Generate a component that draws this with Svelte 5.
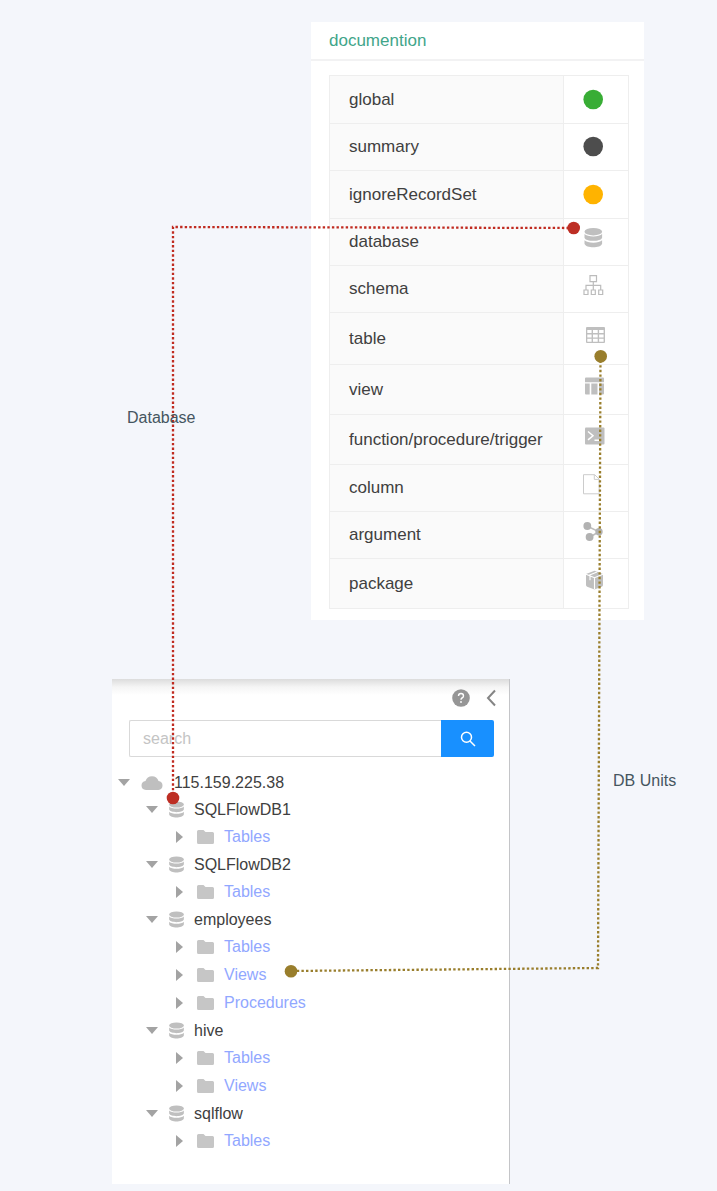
<script>
  const legend = [
    { name: 'global', icon: 'dot', color: '#38ad35', size: 'md' },
    { name: 'summary', icon: 'dot', color: '#4d4d4d', size: 'sm' },
    { name: 'ignoreRecordSet', icon: 'dot', color: '#ffb300', size: 'md' },
    { name: 'database', icon: 'database', size: 'sm' },
    { name: 'schema', icon: 'schema', size: 'sm' },
    { name: 'table', icon: 'table', size: 'xl' },
    { name: 'view', icon: 'view', size: 'lg' },
    { name: 'function/procedure/trigger', icon: 'function', size: 'lg' },
    { name: 'column', icon: 'column', size: 'sm' },
    { name: 'argument', icon: 'argument', size: 'sm' },
    { name: 'package', icon: 'package', size: 'lg' }
  ];

  const leaves = (...names) => names.map((name) => ({ name, level: 'leaf' }));
  const db = (name) => ({ name, level: 'db' });
  const tree = [
    { name: '115.159.225.38', level: 'root' },
    db('SQLFlowDB1'), ...leaves('Tables'),
    db('SQLFlowDB2'), ...leaves('Tables'),
    db('employees'), ...leaves('Tables', 'Views', 'Procedures'),
    db('hive'), ...leaves('Tables', 'Views'),
    db('sqlflow'), ...leaves('Tables')
  ];
</script>

{#snippet cylinder()}
  <ellipse cx="9" cy="4" rx="8.8" ry="3.7" />
  <path d="M.2 6.300C3 9.500 15 9.500 17.800 6.300V10C16.500 14.200 1.500 14.200 .2 10Z" />
  <path d="M.2 12.600C3 15.800 15 15.800 17.800 12.600V16C16.500 20.700 1.500 20.700 .2 16Z" />
{/snippet}

<main>
  <section class="doc">
    <h2>documention</h2>
    <div class="doc-body">
      <table>
        <tbody>
          {#each legend as row}
            <tr class={row.size}>
              <th scope="row">{row.name}</th>
              <td>
                <svg width="24" height="28" viewBox="0 0 24 28" fill="#bfbfbf" aria-hidden="true">
                  {#if row.icon === 'dot'}
                    <circle cx="12.2" cy="13.500" r="9.8" fill={row.color} />
                  {:else if row.icon === 'database'}
                    <g transform="translate(3.300 -.3)">{@render cylinder()}</g>
                  {:else if row.icon === 'schema'}
                    <g fill="none" stroke="#bcbcbc" stroke-width="1.2">
                      <path d="M9 .6h6.500v6H9ZM3 15h4v4.500H3ZM10.300 15h4v4.500h-4ZM17.700 15h4v4.500h-4Z" />
                      <path d="M12.300 6.600V15M5 15v-4.700h14.700V15" />
                    </g>
                  {:else if row.icon === 'table'}
                    <path transform="translate(0 -1)" fill-rule="evenodd" d="M6 3h17q1 0 1 1v14q0 1-1 1H6q-1 0-1-1V4q0-1 1-1ZM6.300 6v3.100h4.300V6ZM12 6v3.100h4.700V6ZM18.100 6v3.100h4.500V6ZM6.300 10.400v3h4.300v-3ZM12 10.400v3h4.700v-3ZM18.100 10.400v3h4.500v-3ZM6.300 14.700v3h4.300v-3ZM12 14.700v3h4.700v-3ZM18.100 14.700v3h4.500v-3Z" />
                  {:else if row.icon === 'view'}
                    <path transform="translate(0 -1)" d="M5 2.500h17q1 0 1 1v3.700H4V3.500q0-1 1-1ZM4 8.500h4.700v11H5q-1 0-1-1ZM10.300 8.500h6.200v11h-6.200ZM18 8.500h5v10q0 1-1 1h-4Z" />
                  {:else if row.icon === 'function'}
                    <rect x="4" y="1.500" width="19.500" height="17" rx="1" />
                    <path d="m7 5.500 5 4.200-5 4.200M13.500 14.300H20" fill="none" stroke="#fff" stroke-width="1.500" />
                  {:else if row.icon === 'column'}
                    <path transform="translate(0 -1)" d="M2.500 1.700h11.200l4.500 4.500v14.600H2.500ZM13.300 1.700v4.700h4.900" fill="none" stroke="#ccc" />
                  {:else if row.icon === 'argument'}
                    <g transform="translate(0 .5)">
                      <path d="M6 4.500 18 10.200 9 15.500" fill="none" stroke="#bdbdbd" stroke-width="1.500" />
                      <g fill="#b2b2b2"><circle cx="6.300" cy="4.500" r="3.900" /><circle cx="18" cy="10.200" r="3.700" /><circle cx="8.600" cy="15.500" r="3.900" /></g>
                    </g>
                  {:else}
                    <path d="M13.500.7 22 4v11q0 1.200-1.200 1.700L13.500 19.500 6.200 16.700Q5 16.200 5 15V4Z" />
                    <path d="M5 4.500 13.500 8 22 4.500M13.500 8v11.500M8 5.500 16 2.300M9 6.500v4" transform="translate(0 -.3)" fill="none" stroke="#fff" stroke-width="1.100" />
                  {/if}
                </svg>
              </td>
            </tr>
          {/each}
        </tbody>
      </table>
    </div>
  </section>

  <section class="browser">
    <div class="toolbar">
      <button type="button" aria-label="Help">
        <svg width="18" height="18" viewBox="0 0 18 18" aria-hidden="true">
          <circle cx="9" cy="9" r="8.800" fill="#969696" />
          <path d="M6.500 7q0-2.500 2.500-2.500T11.500 7Q11.500 8.300 10 9 9 9.500 9 10.700" fill="none" stroke="#fff" stroke-width="1.400" />
          <circle cx="9" cy="13" r=".9" fill="#fff" />
        </svg>
      </button>
      <button type="button" aria-label="Collapse">
        <svg width="10" height="18" viewBox="0 0 10 18" fill="none" stroke="#858585" stroke-width="2" aria-hidden="true">
          <path d="M9 1.500 2 9l7 7.500" />
        </svg>
      </button>
    </div>
    <form class="search" onsubmit={(e) => e.preventDefault()}>
      <input type="text" placeholder="search" aria-label="search" />
      <button type="submit" aria-label="Search">
        <svg width="16" height="16" viewBox="0 0 16 16" fill="none" stroke="#fff" stroke-width="1.500" aria-hidden="true">
          <circle cx="6.500" cy="6.300" r="5" /><path d="m10 10 5 5" />
        </svg>
      </button>
    </form>
    <ul>
      {#each tree as node}
        <li class={node.level}>
          <span class="caret">
            <svg width="12" height="12" viewBox="0 0 12 12" fill="#a3a3a3" aria-hidden="true">
              <path d={node.level === 'leaf' ? 'M2 0 9 6l-7 6Z' : 'M0 2h12L6 9Z'} />
            </svg>
          </span>
          <span class="icon">
            {#if node.level === 'root'}
              <svg width="22" height="14" viewBox="0 0 22 14" fill="#bfbfbf" aria-hidden="true">
                <path d="M5 14Q.5 13.500.5 9.500T4.500 5Q6 .3 11 .3T17.500 5Q21.500 5.700 21.500 9.500T17.500 14Z" />
              </svg>
            {:else if node.level === 'db'}
              <svg width="15" height="17" viewBox="0 0 18 20" fill="#bfbfbf" aria-hidden="true">{@render cylinder()}</svg>
            {:else}
              <svg width="17" height="14" viewBox="0 0 17 14" fill="#c6c6c6" aria-hidden="true">
                <path d="M1.500 0h5l2 2H15.500Q17 2 17 3.500v9Q17 14 15.500 14h-14Q0 14 0 12.500v-11Q0 0 1.500 0Z" />
              </svg>
            {/if}
          </span>
          <span>{node.name}</span>
        </li>
      {/each}
    </ul>
  </section>

  <svg class="links" width="717" height="1191" viewBox="0 0 717 1191" fill="none" stroke-width="2.300" aria-hidden="true">
    <path d="M573.500 228 173 227V798" stroke="#c02b20" stroke-dasharray="2.400 2.200" />
    <path d="M600.500 356 598 968 291 971" stroke="#997e2c" stroke-dasharray="2.400 2.200" />
    <g fill="#bd2e24"><circle cx="573.700" cy="228" r="6.300" /><circle cx="173" cy="798" r="6.300" /></g>
    <g fill="#997e2c"><circle cx="600.700" cy="356.300" r="6.300" /><circle cx="291" cy="971.200" r="6.300" /></g>
  </svg>
  <span class="label database">Database</span>
  <span class="label units">DB Units</span>
</main>

<style>
  :global(body) {
    margin: 0;
    background: #f4f6fb;
  }
  main {
    position: relative;
    display: flow-root;
    padding-bottom: 7px;
    font-family: "Liberation Sans", Arial, sans-serif;
    font-size: 16px;
    color: #404040;
  }
  .doc {
    margin: 22px 73px 0 311px;
    background: #fff;
    font-size: 17px;
  }
  h2 {
    margin: 0;
    padding: 0 18px;
    border-bottom: 2px solid #f2f2f3;
    font-size: 17px;
    font-weight: 400;
    line-height: 37px;
    color: #41a58a;
  }
  .doc-body {
    padding: 14px 15px 11px 18px;
  }
  table {
    width: 100%;
    border-collapse: collapse;
    table-layout: fixed;
  }
  th, td {
    box-sizing: border-box;
    padding: 0;
    border: 1px solid #eee;
    vertical-align: middle;
  }
  th {
    padding-left: 19px;
    background: #fafafa;
    font-weight: 400;
    text-align: left;
  }
  td {
    width: 65px;
    padding-left: 17px;
  }
  td svg {
    display: block;
  }
  .sm { height: 47px; }
  .md { height: 48px; }
  .lg { height: 50px; }
  .xl { height: 52px; }
  .browser {
    margin: 59px 207px 0 112px;
    padding-bottom: 29px;
    border-right: 1px solid #c4c5c8;
    background: linear-gradient(#dcdcdc, #f5f5f5 8px, #fff 16px);
  }
  button {
    display: flex;
    align-items: center;
    justify-content: center;
    padding: 0;
    border: 0;
    background: none;
    cursor: pointer;
  }
  .toolbar {
    display: flex;
    justify-content: flex-end;
    gap: 16px;
    padding: 10px 13px 13px;
  }
  .search {
    display: flex;
    height: 37px;
    margin: 0 15px 0 17px;
  }
  .search input {
    flex: 1;
    min-width: 0;
    box-sizing: border-box;
    padding: 0 13px;
    border: 1px solid #d9d9d9;
    border-right: 0;
    border-radius: 2px 0 0 2px;
    background: #fff;
    font: inherit;
    color: #404040;
  }
  .search input::placeholder {
    color: #c4c4c4;
    opacity: 1;
  }
  .search button {
    width: 53px;
    border-radius: 0 2px 2px 0;
    background: #1890ff;
  }
  ul {
    margin: 12px 0 0;
    padding: 0;
    list-style: none;
  }
  li {
    display: flex;
    align-items: center;
    height: 27px;
    white-space: nowrap;
  }
  .caret, .icon {
    display: flex;
    justify-content: center;
  }
  .caret { width: 24px; }
  .icon {
    width: 24px;
    margin-right: 6px;
  }
  .root .icon { width: 32px; }
  .db { padding-left: 28px; }
  .leaf {
    height: 28px;
    padding-left: 56px;
    color: #91a7ff;
  }
  .leaf .icon { width: 26px; }
  .links {
    position: absolute;
    top: 0;
    left: 0;
    pointer-events: none;
  }
  .label {
    position: absolute;
    line-height: 20px;
    color: #455560;
  }
  .database {
    top: 408px;
    left: 127px;
  }
  .units {
    top: 771px;
    left: 613px;
  }
</style>
